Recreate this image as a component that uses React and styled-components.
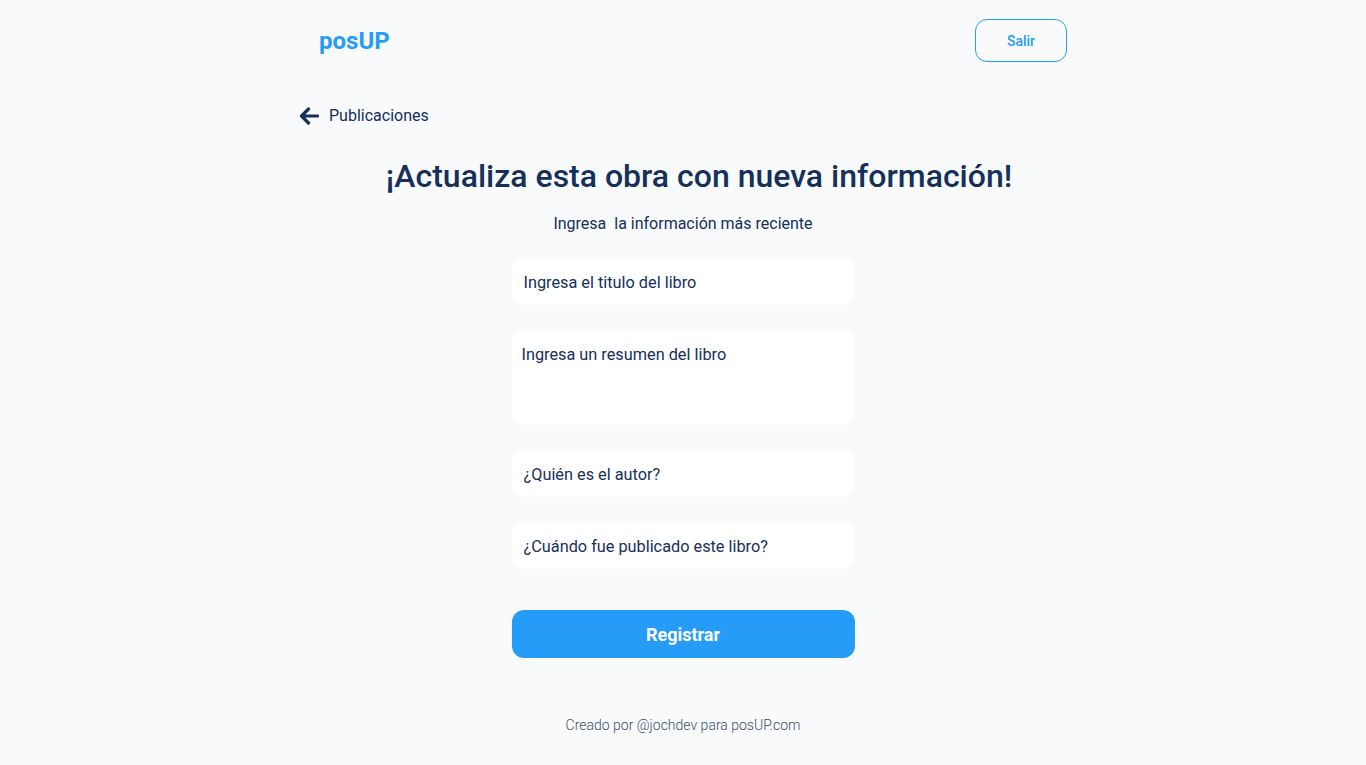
import React from 'react'
import styled, { createGlobalStyle } from 'styled-components'

const App = () => {
  return (
    <>
      <GlobalStyle />
      <Page>
        <Header>
          <Logo>posUP</Logo>
          <OutlineButton>Salir</OutlineButton>
        </Header>

        <BackLink href='#'>
          <ArrowIcon />
          Publicaciones
        </BackLink>

        <Title>¡Actualiza esta obra con nueva información!</Title>
        <Subtitle>Ingresa&nbsp; la información más reciente</Subtitle>

        <Form onSubmit={(e) => e.preventDefault()}>
          <Input placeholder='Ingresa el titulo del libro' />
          <TextArea placeholder='Ingresa un resumen del libro' />
          <Input placeholder='¿Quién es el autor?' />
          <Input placeholder='¿Cuándo fue publicado este libro?' />
          <SubmitButton type='submit'>Registrar</SubmitButton>
        </Form>

        <Footer>Creado por @jochdev para posUP.com</Footer>
      </Page>
    </>
  )
}

const ArrowIcon = () => (
  <svg width='20' height='18' viewBox='0 0 20 18' fill='none'>
    <path
      d='M18.5 9H2.5M9.5 2L2.5 9L9.5 16'
      stroke='#15305a'
      strokeWidth='3.2'
      strokeLinecap='round'
      strokeLinejoin='round'
    />
  </svg>
)

const GlobalStyle = createGlobalStyle`
  * {
    box-sizing: border-box;
  }

  body {
    margin: 0;
    background: #f8fafc;
    font-family: Roboto, 'Liberation Sans', sans-serif;
    color: #15305a;
  }
`

const Page = styled.div`
  width: 768px;
  margin: 0 auto;
  display: flex;
  flex-direction: column;
  align-items: center;
`

const Header = styled.header`
  width: 100%;
  display: flex;
  justify-content: space-between;
  align-items: center;
  padding-top: 19px;
`

const Logo = styled.h1`
  margin: 0 0 0 20px;
  font-size: 24px;
  font-weight: 700;
  color: #259cf8;
`

const OutlineButton = styled.button`
  width: 92px;
  height: 43px;
  border: 1px solid #259cf8;
  border-radius: 12px;
  background: transparent;
  color: #259cf8;
  font-family: inherit;
  font-size: 14px;
  font-weight: 500;
  cursor: pointer;
`

const BackLink = styled.a`
  align-self: flex-start;
  display: flex;
  align-items: center;
  gap: 10px;
  margin-top: 44px;
  color: #15305a;
  font-size: 16px;
  text-decoration: none;
`

const Title = styled.h2`
  margin: 32px 0 0;
  padding-left: 32px;
  font-size: 32px;
  font-weight: 500;
  line-height: 38px;
`

const Subtitle = styled.p`
  margin: 19px 0 0;
  font-size: 16px;
  font-weight: 400;
`

const Form = styled.form`
  width: 343px;
  margin-top: 24px;
  display: flex;
  flex-direction: column;
  gap: 24px;
`

const fieldStyles = `
  width: 100%;
  border: none;
  border-radius: 12px;
  background: #fff;
  font-family: Roboto, 'Liberation Sans', sans-serif;
  font-size: 16.3px;
  font-weight: 400;
  color: #15305a;
  outline: none;

  &::placeholder {
    color: #15305a;
    opacity: 1;
  }
`

const Input = styled.input`
  ${fieldStyles}
  height: 48px;
  padding: 2px 12px 0;
`

const TextArea = styled.textarea`
  ${fieldStyles}
  height: 96px;
  padding: 16px 10px;
  resize: none;
`

const SubmitButton = styled.button`
  height: 48px;
  margin-top: 17px;
  border: none;
  border-radius: 12px;
  background: #259cf8;
  color: #fff;
  font-family: inherit;
  font-size: 18px;
  font-weight: 700;
  cursor: pointer;
`

const Footer = styled.footer`
  margin-top: 59px;
  font-size: 14px;
  font-weight: 300;
  color: #3d4f6b;
`

export default App
